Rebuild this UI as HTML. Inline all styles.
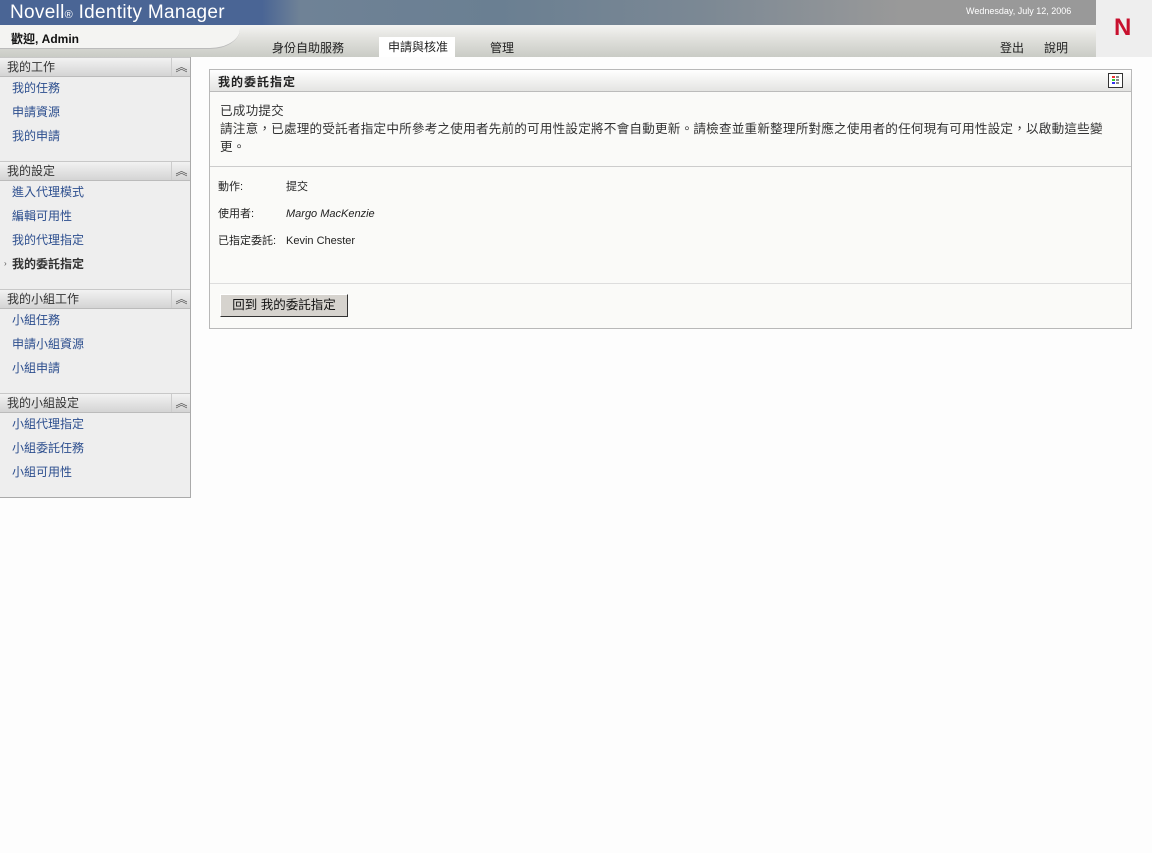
<!DOCTYPE html>
<html><head><meta charset="utf-8"><style>
body{margin:0;width:1152px;height:853px;background:#fdfdfd;font-family:"Liberation Sans","Noto Sans CJK TC",sans-serif;font-size:12px;position:relative;overflow:hidden;color:#222}
.a{position:absolute}
.top{left:0;top:0;width:1096px;height:25px;background:linear-gradient(90deg,#4a6595 0,#4a6595 262px,#6f8296 300px,#6a7f92 500px,#7b8894 700px,#999 900px,#999 100%)}
.title{left:10px;top:2px;color:#fff;font-size:19px;letter-spacing:0.3px}
.date{left:966px;top:6px;color:#fff;font-size:9px}
.nbox{left:1096px;top:0;width:56px;height:57px;background:#eeeeee}
.nbar{left:0;top:25px;width:1096px;height:32px;background:linear-gradient(#f4f4f2,#e2e2de 40%,#c9cbc5)}
.side{left:0;top:57px;width:190px;height:440px;background:#eeeeee;border-right:1px solid #aaa;border-bottom:1px solid #aaa}
.sh{left:0;width:190px;height:18px;background:linear-gradient(#f2f2f2,#d4d4d4);border-top:1px solid #c8c8c8;border-bottom:1px solid #bbb}
.sh span{position:absolute;left:7px;top:1px;font-size:12px;line-height:16px;color:#333}
.sh i{position:absolute;left:171px;top:0;width:19px;height:18px;border-left:1px solid #ccc;font-style:normal;font-size:12px;color:#555;text-align:center;line-height:18px}
.it{left:12px;color:#2c4e8e;font-size:12px;line-height:14px}
.panel{left:209px;top:69px;width:921px;height:258px;border:1px solid #b8b8b8;background:#fafaf8}
.l{font-size:11px;line-height:14px}
</style></head><body>
<div class="a top"></div>
<div class="a title">Novell<span style="font-size:11px">®</span> Identity Manager</div>
<div class="a date">Wednesday, July 12, 2006</div>
<div class="a nbox"><div class="a" style="left:18px;top:14px;color:#c8102e;font-size:24px;font-weight:bold">N</div></div>
<div class="a nbar"></div>
<div class="a" style="left:0;top:25px;width:240px;height:23px;background:#f4f4f2;border-bottom:1px solid #bbb;border-bottom-right-radius:30px 20px"></div>
<div class="a" style="left:11px;top:30px;font-weight:bold;font-size:12px;color:#111">歡迎, Admin</div>
<div class="a" style="left:379px;top:37px;width:76px;height:20px;background:#fff"></div>
<div class="a" style="left:272px;top:39px">身份自助服務</div>
<div class="a" style="left:388px;top:38px">申請與核准</div>
<div class="a" style="left:490px;top:39px">管理</div>
<div class="a" style="left:1000px;top:39px">登出</div>
<div class="a" style="left:1044px;top:39px">說明</div>

<div class="a side"></div>
<div class="a sh" style="top:57px"><span>我的工作</span><i>︽</i></div>
<div class="a it" style="top:81px">我的任務</div>
<div class="a it" style="top:105px">申請資源</div>
<div class="a it" style="top:129px">我的申請</div>
<div class="a sh" style="top:161px"><span>我的設定</span><i>︽</i></div>
<div class="a it" style="top:185px">進入代理模式</div>
<div class="a it" style="top:209px">編輯可用性</div>
<div class="a it" style="top:233px">我的代理指定</div>
<div class="a" style="left:4px;top:259px;font-size:8px;color:#555">›</div>
<div class="a it" style="top:257px;font-weight:bold;color:#333">我的委託指定</div>
<div class="a sh" style="top:289px"><span>我的小組工作</span><i>︽</i></div>
<div class="a it" style="top:313px">小組任務</div>
<div class="a it" style="top:337px">申請小組資源</div>
<div class="a it" style="top:361px">小組申請</div>
<div class="a sh" style="top:393px"><span>我的小組設定</span><i>︽</i></div>
<div class="a it" style="top:417px">小組代理指定</div>
<div class="a it" style="top:441px">小組委託任務</div>
<div class="a it" style="top:465px">小組可用性</div>

<div class="a panel">
 <div class="a" style="left:0;top:0;width:921px;height:21px;background:linear-gradient(#fff,#e4e4e2);border-bottom:1px solid #bbb"></div>
 <div class="a" style="left:8px;top:3px;font-weight:bold;letter-spacing:1px">我的委託指定</div>
 <div class="a" style="left:898px;top:3px;width:13px;height:13px;border:1px solid #333;background:#fff">
  <div class="a" style="left:3px;top:2px;width:3px;height:2px;background:#e33"></div><div class="a" style="left:7px;top:2px;width:3px;height:2px;background:#888"></div>
  <div class="a" style="left:3px;top:5px;width:3px;height:2px;background:#3c3"></div><div class="a" style="left:7px;top:5px;width:3px;height:2px;background:#888"></div>
  <div class="a" style="left:3px;top:8px;width:3px;height:2px;background:#33e"></div><div class="a" style="left:7px;top:8px;width:3px;height:2px;background:#888"></div>
 </div>
 <div class="a" style="left:10px;top:32px;line-height:18px;width:905px;color:#333;font-size:12.6px;letter-spacing:0.2px">已成功提交<br>請注意，已處理的受託者指定中所參考之使用者先前的可用性設定將不會自動更新。請檢查並重新整理所對應之使用者的任何現有可用性設定，以啟動這些變更。</div>
 <div class="a" style="left:0;top:96px;width:921px;height:1px;background:#ccc"></div>
 <div class="a l" style="left:8px;top:110px">動作:</div><div class="a l" style="left:76px;top:110px">提交</div>
 <div class="a l" style="left:8px;top:137px">使用者:</div><div class="a l" style="left:76px;top:137px;font-style:italic">Margo MacKenzie</div>
 <div class="a l" style="left:8px;top:164px">已指定委託:</div><div class="a l" style="left:76px;top:164px">Kevin Chester</div>
 <div class="a" style="left:0;top:213px;width:921px;height:1px;background:#ddd"></div>
 <div class="a" style="left:10px;top:224px;width:126px;height:21px;background:#d6d3ce;border:1px solid #fff;border-right-color:#333;border-bottom-color:#333;text-align:center;line-height:20px;font-size:12.5px;color:#111">回到 我的委託指定</div>
</div>
</body></html>
